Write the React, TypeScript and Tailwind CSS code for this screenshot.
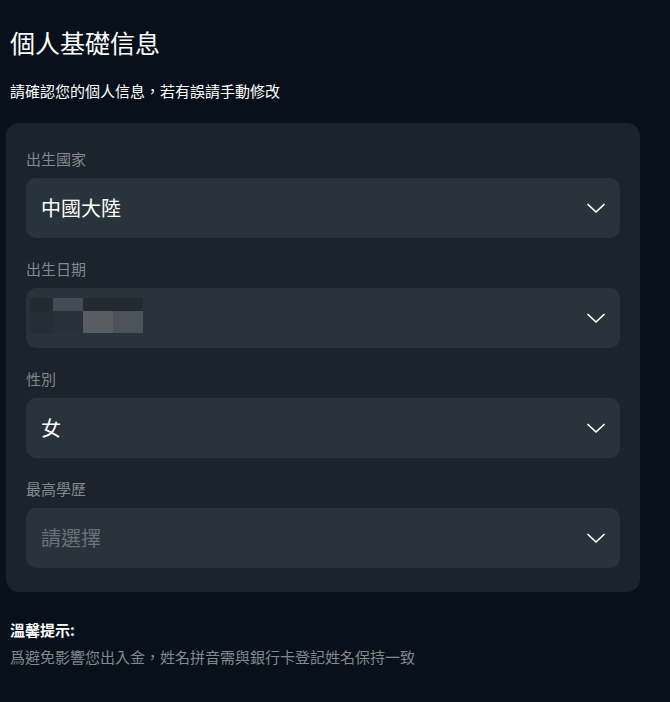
import React from "react";

const Chevron = () => (
  <svg width="20" height="20" viewBox="0 0 20 20" fill="none" className="shrink-0">
    <path d="M2 6.5 L10 14 L18 6.5" stroke="#ffffff" strokeWidth="1.7" strokeLinecap="round" strokeLinejoin="round" />
  </svg>
);

const Blur = () => (
  <div className="mb-[5px] flex flex-col">
    <div className="flex h-[13px]">
      <div className="w-[23px] bg-[#222a32]" />
      <div className="w-[30px] bg-[#434c55]" />
      <div className="w-[30px] bg-[#222a32]" />
      <div className="w-[30px] bg-[#222a32]" />
    </div>
    <div className="flex h-[22px]">
      <div className="w-[23px] bg-[#252e36]" />
      <div className="w-[30px] bg-[#28313a]" />
      <div className="w-[30px] bg-[#575d63]" />
      <div className="w-[30px] bg-[#4b5259]" />
    </div>
  </div>
);

function Field({ label, children, pl = "pl-[15px]" }: { label: string; children: React.ReactNode; pl?: string }) {
  return (
    <div className="flex flex-col">
      <div className="h-[20px] text-[15px] leading-[20px] text-[#82898f]">{label}</div>
      <div className={`mt-[9px] flex h-[60px] items-center justify-between rounded-[10px] bg-[#29333c] ${pl} pr-[14px]`}>
        {children}
        <Chevron />
      </div>
    </div>
  );
}

export default function App() {
  return (
    <div
      className="min-h-[702px] w-[670px] bg-[#08111b] pl-[6px] pr-[30px] pt-[26px]"
      style={{ fontFamily: '"Noto Sans CJK TC", "Noto Sans CJK SC", sans-serif' }}
    >
      <h1 className="pl-[4px] text-[25px] leading-[32px] text-white">個人基礎信息</h1>
      <p className="mt-[23px] pl-[4px] text-[15px] leading-[20px] text-white">請確認您的個人信息，若有誤請手動修改</p>
      <div className="mt-[22px] flex flex-col gap-[21px] rounded-[13px] bg-[#1b232c] px-[20px] pb-[24px] pt-[26px]">
        <Field label="出生國家">
          <span className="text-[20px] text-white">中國大陸</span>
        </Field>
        <Field label="出生日期" pl="pl-[4px]">
          <Blur />
        </Field>
        <Field label="性別">
          <span className="text-[20px] text-white">女</span>
        </Field>
        <Field label="最高學歷">
          <span className="text-[20px] text-[#6a7179]">請選擇</span>
        </Field>
      </div>
      <div className="mt-[28px] pl-[4px] text-[15px] font-bold leading-[20px] text-white">溫馨提示:</div>
      <div className="mt-[7px] pl-[4px] text-[15px] leading-[20px] text-[#82898f]">
        爲避免影響您出入金，姓名拼音需與銀行卡登記姓名保持一致
      </div>
    </div>
  );
}
